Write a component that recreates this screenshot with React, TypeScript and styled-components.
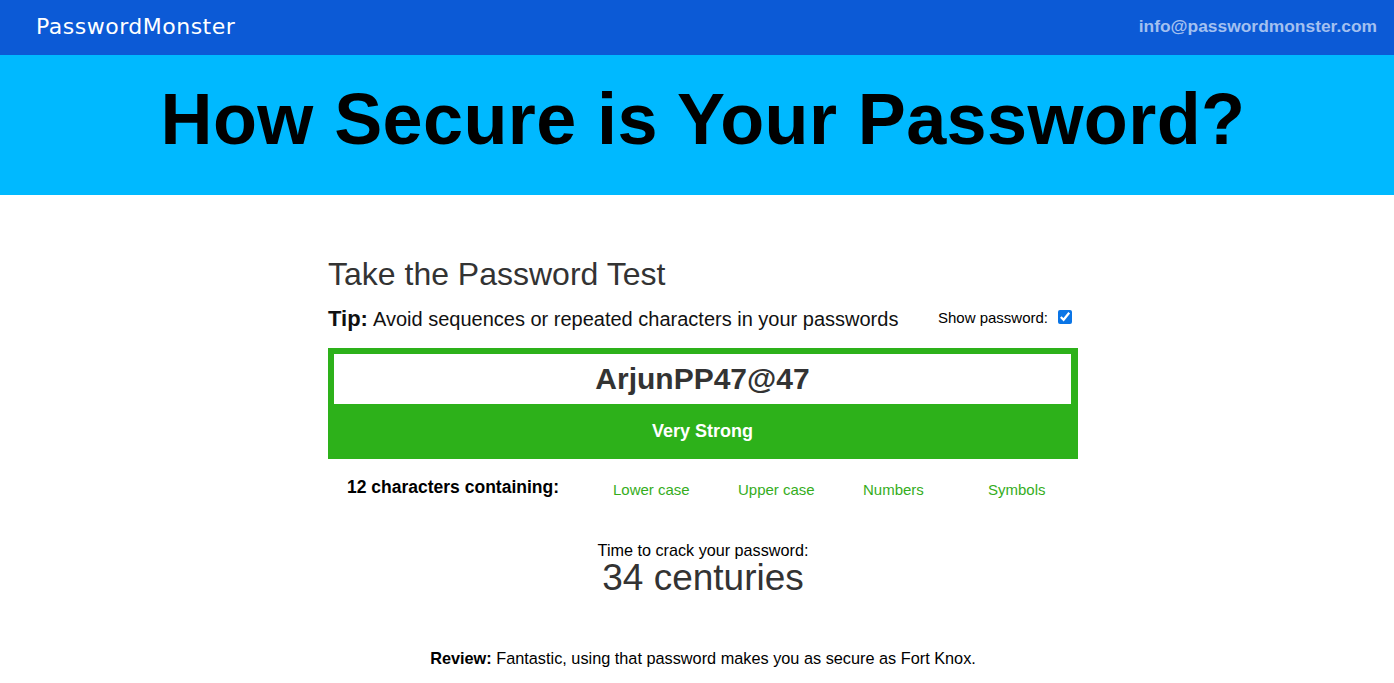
import React from "react";
import styled, { createGlobalStyle } from "styled-components";

const GlobalStyle = createGlobalStyle`
  html, body { margin: 0; padding: 0; background: #fff; }
  body { font-family: "Liberation Sans", Arial, sans-serif; color: #000; }
  * { box-sizing: border-box; }
`;

const TopBar = styled.header`
  height: 55px;
  background: #0c5ad6;
  display: flex;
  align-items: center;
  justify-content: space-between;
  padding: 0 17px 2px 36px;
`;

const Brand = styled.div`
  font-family: "DejaVu Sans", sans-serif;
  font-size: 22px;
  color: #ffffff;
  letter-spacing: 0.5px;
`;

const Email = styled.a`
  font-family: "Liberation Sans", Arial, sans-serif;
  font-weight: bold;
  font-size: 17.4px;
  color: #a3c0f0;
  text-decoration: none;
`;

const Banner = styled.section`
  height: 140px;
  background: #00b9ff;
  padding: 24px 0 0 12px;
  display: flex;
  justify-content: center;
`;

const Title = styled.h1`
  margin: 0;
  font-family: "Liberation Sans", Arial, sans-serif;
  font-weight: bold;
  font-size: 72px;
  line-height: 80px;
  letter-spacing: 0.4px;
  color: #000;
`;

const Main = styled.main`
  padding-left: 12px;
`;

const Column = styled.div`
  width: 750px;
  margin: 0 auto;
`;

const Heading = styled.h2`
  margin: 61px 0 0;
  font-weight: normal;
  font-size: 32px;
  line-height: 36px;
  color: #333;
`;

const TipRow = styled.div`
  margin-top: 14px;
  height: 26px;
  display: flex;
  justify-content: space-between;
  align-items: flex-start;
`;

const Tip = styled.p`
  margin: 0;
  font-size: 20px;
  line-height: 26px;
  color: #111;
  display: flex;
  align-items: baseline;
  gap: 5px;
`;

const TipLabel = styled.strong`
  font-size: 22px;
`;

const ShowToggle = styled.label`
  display: flex;
  align-items: center;
  gap: 10px;
  font-size: 15px;
  color: #000;
  padding: 0 6px 0 0;
  margin-top: 1px;
`;

const ToggleText = styled.span`
  line-height: 18px;
  margin-top: 2px;
`;

const Check = styled.input`
  width: 14px;
  height: 14px;
  margin: 0;
  accent-color: #0a75e6;
`;

const StrengthBox = styled.div`
  margin-top: 16px;
  background: #2db11a;
  padding: 6px 7px 0 6px;
`;

const PasswordField = styled.input`
  display: block;
  width: 100%;
  height: 50px;
  border: none;
  outline: none;
  background: #fff;
  text-align: center;
  font-family: "Liberation Sans", Arial, sans-serif;
  font-weight: bold;
  font-size: 30px;
  color: #333;
  padding: 0;
`;

const StrengthLabel = styled.div`
  height: 55px;
  display: flex;
  align-items: center;
  justify-content: center;
  font-weight: bold;
  font-size: 18px;
  color: #fff;
  padding-bottom: 1px;
`;

const Criteria = styled.div`
  margin-top: 18px;
  display: grid;
  grid-template-columns: 250px repeat(4, 125px);
`;

const CountLabel = styled.div`
  text-align: center;
  font-weight: bold;
  font-size: 17.5px;
  line-height: 20px;
  color: #000;
`;

const CriteriaItem = styled.div<{ $met: boolean }>`
  padding: 3px 0 0 35px;
  font-size: 15px;
  line-height: 20px;
  color: ${(p) => (p.$met ? "#35ad1c" : "#999")};
`;

const CrackBlock = styled.div`
  margin-top: 41px;
  text-align: center;
`;

const CrackLabel = styled.div`
  font-size: 16.2px;
  line-height: 18px;
  color: #000;
`;

const CrackTime = styled.div`
  font-size: 37px;
  line-height: 38px;
  color: #333;
`;

const Review = styled.p`
  margin: 52px 0 0;
  text-align: center;
  font-size: 16.3px;
  line-height: 18px;
  color: #000;
`;

const criteria = ["Lower case", "Upper case", "Numbers", "Symbols"];

export default function App() {
  return (
    <>
      <GlobalStyle />
      <TopBar>
        <Brand>PasswordMonster</Brand>
        <Email href="#">info@passwordmonster.com</Email>
      </TopBar>
      <Banner>
        <Title>How Secure is Your Password?</Title>
      </Banner>
      <Main>
        <Column>
          <Heading>Take the Password Test</Heading>
          <TipRow>
            <Tip>
              <TipLabel>Tip:</TipLabel>
              Avoid sequences or repeated characters in your passwords
            </Tip>
            <ShowToggle>
              <ToggleText>Show password:</ToggleText>
              <Check type="checkbox" defaultChecked />
            </ShowToggle>
          </TipRow>
          <StrengthBox>
            <PasswordField type="text" defaultValue="ArjunPP47@47" />
            <StrengthLabel>Very Strong</StrengthLabel>
          </StrengthBox>
          <Criteria>
            <CountLabel>12 characters containing:</CountLabel>
            {criteria.map((c) => (
              <CriteriaItem key={c} $met>
                {c}
              </CriteriaItem>
            ))}
          </Criteria>
          <CrackBlock>
            <CrackLabel>Time to crack your password:</CrackLabel>
            <CrackTime>34 centuries</CrackTime>
          </CrackBlock>
          <Review>
            <strong>Review:</strong> Fantastic, using that password makes you as secure as Fort Knox.
          </Review>
        </Column>
      </Main>
    </>
  );
}
